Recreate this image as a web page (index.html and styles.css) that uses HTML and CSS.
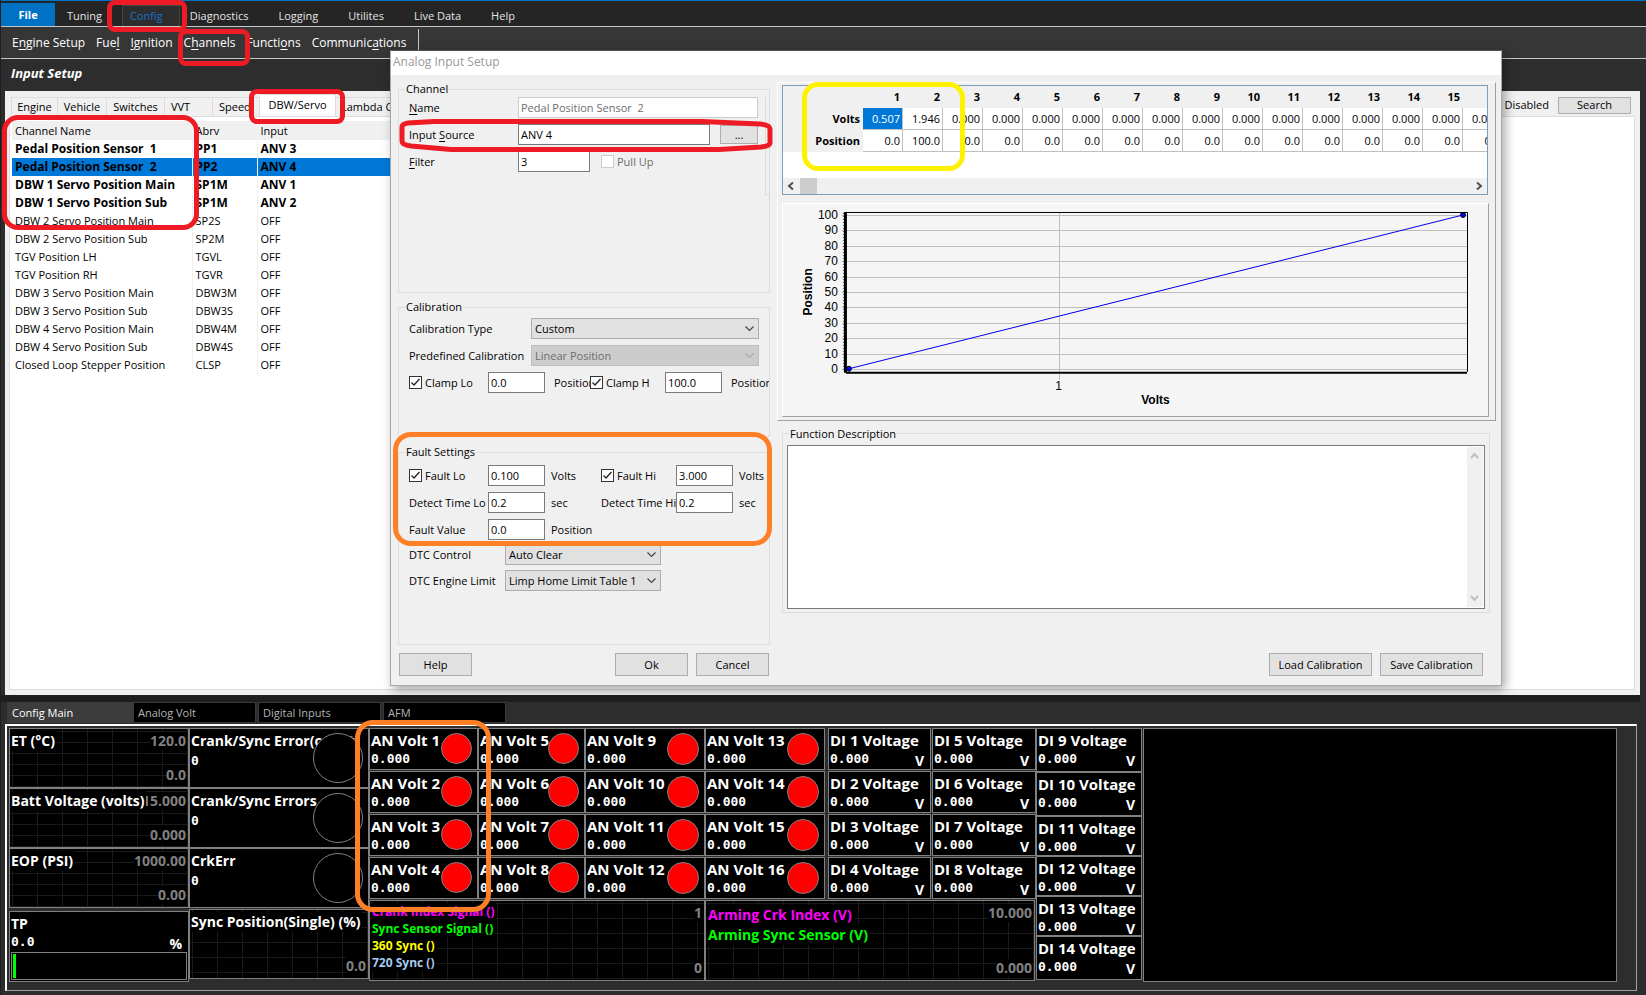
FILE: index.html
```html
<!DOCTYPE html>
<html lang="en">
<head>
<meta charset="utf-8">
<title>Input Setup</title>
<link rel="stylesheet" href="styles.css">
</head>
<body>
<div class="app">
  <nav class="menubar">
    <button class="file-btn">File</button>
    <button class="menu-item">Tuning</button>
    <button class="menu-item menu-active">Config</button>
    <button class="menu-item">Diagnostics</button>
    <button class="menu-item">Logging</button>
    <button class="menu-item">Utilites</button>
    <button class="menu-item">Live Data</button>
    <button class="menu-item">Help</button>
  </nav>
  <nav class="submenu">
    <button>E<u>n</u>gine Setup</button>
    <button>Fue<u>l</u></button>
    <button><u>I</u>gnition</button>
    <button>C<u>h</u>annels</button>
    <button>Functi<u>o</u>ns</button>
    <button>Communic<u>a</u>tions</button>
    <span class="submenu-end"></span>
  </nav>
  <h1 class="page-title">Input Setup</h1>

  <main class="setup">
    <div class="tabrow">
      <button class="tab">Engine</button>
      <button class="tab">Vehicle</button>
      <button class="tab tab-mid">Switches</button>
      <button class="tab tab-vvt">VVT</button>
      <button class="tab tab-speed">Speed</button>
      <button class="tab tab-on">DBW/Servo</button>
      <button class="tab tab-lambda">Lambda C</button>
      <span class="status">Disabled</span>
      <button class="btn search">Search</button>
    </div>
    <div class="list-body">
      <table class="channels">
        <thead><tr><th>Channel Name</th><th>Abrv</th><th>Input</th></tr></thead>
        <tbody>
          <tr class="set"><td>Pedal Position Sensor&nbsp; 1</td><td>PP1</td><td>ANV 3</td></tr>
          <tr class="set picked"><td>Pedal Position Sensor&nbsp; 2</td><td>PP2</td><td>ANV 4</td></tr>
          <tr class="set"><td>DBW 1 Servo Position Main</td><td>SP1M</td><td>ANV 1</td></tr>
          <tr class="set"><td>DBW 1 Servo Position Sub</td><td>SP1M</td><td>ANV 2</td></tr>
          <tr><td>DBW 2 Servo Position Main</td><td>SP2S</td><td>OFF</td></tr>
          <tr><td>DBW 2 Servo Position Sub</td><td>SP2M</td><td>OFF</td></tr>
          <tr><td>TGV Position LH</td><td>TGVL</td><td>OFF</td></tr>
          <tr><td>TGV Position RH</td><td>TGVR</td><td>OFF</td></tr>
          <tr><td>DBW 3 Servo Position Main</td><td>DBW3M</td><td>OFF</td></tr>
          <tr><td>DBW 3 Servo Position Sub</td><td>DBW3S</td><td>OFF</td></tr>
          <tr><td>DBW 4 Servo Position Main</td><td>DBW4M</td><td>OFF</td></tr>
          <tr><td>DBW 4 Servo Position Sub</td><td>DBW4S</td><td>OFF</td></tr>
          <tr><td>Closed Loop Stepper Position</td><td>CLSP</td><td>OFF</td></tr>
        </tbody>
      </table>
    </div>
  </main>

  <section class="dash">
    <div class="dash-tabs">
      <button class="dash-tab dash-tab-on">Config Main</button>
      <button class="dash-tab">Analog Volt</button>
      <button class="dash-tab">Digital Inputs</button>
      <button class="dash-tab">AFM</button>
    </div>
    <div class="canvas">
      <div class="col col-a">
        <div class="g graph tall"><b class="name">ET (°C)</b><span class="hi">120.0</span><span class="lo">0.0</span></div>
        <div class="g graph tall"><b class="name">Batt Voltage (volts)</b><span class="hi">15.000</span><span class="lo">0.000</span></div>
        <div class="g graph tall"><b class="name">EOP (PSI)</b><span class="hi">1000.00</span><span class="lo">0.00</span></div>
        <div class="g bar"><b class="name">TP</b><span class="val">0.0</span><span class="unit">%</span><div class="track"><i class="fill"></i></div></div>
      </div>
      <div class="col col-b">
        <div class="g tall"><b class="name">Crank/Sync Error(count)</b><span class="val">0</span><i class="lamp lamp-off"></i></div>
        <div class="g tall"><b class="name">Crank/Sync Errors</b><span class="val">0</span><i class="lamp lamp-off"></i></div>
        <div class="g tall"><b class="name">CrkErr</b><span class="val">0</span><i class="lamp lamp-off"></i></div>
        <div class="g graph sync"><b class="name">Sync Position(Single) (%)</b><span class="lo">0.0</span></div>
      </div>
      <div class="middle">
        <div class="volts">
          <div class="col col-c">
            <div class="g cell"><b class="name">AN Volt 1</b><span class="val">0.000</span><i class="lamp"></i></div>
            <div class="g cell"><b class="name">AN Volt 2</b><span class="val">0.000</span><i class="lamp"></i></div>
            <div class="g cell"><b class="name">AN Volt 3</b><span class="val">0.000</span><i class="lamp"></i></div>
            <div class="g cell"><b class="name">AN Volt 4</b><span class="val">0.000</span><i class="lamp"></i></div>
          </div>
          <div class="col col-d">
            <div class="g cell"><b class="name">AN Volt 5</b><span class="val">0.000</span><i class="lamp"></i></div>
            <div class="g cell"><b class="name">AN Volt 6</b><span class="val">0.000</span><i class="lamp"></i></div>
            <div class="g cell"><b class="name">AN Volt 7</b><span class="val">0.000</span><i class="lamp"></i></div>
            <div class="g cell"><b class="name">AN Volt 8</b><span class="val">0.000</span><i class="lamp"></i></div>
          </div>
          <div class="col col-e">
            <div class="g cell"><b class="name">AN Volt 9</b><span class="val">0.000</span><i class="lamp"></i></div>
            <div class="g cell"><b class="name">AN Volt 10</b><span class="val">0.000</span><i class="lamp"></i></div>
            <div class="g cell"><b class="name">AN Volt 11</b><span class="val">0.000</span><i class="lamp"></i></div>
            <div class="g cell"><b class="name">AN Volt 12</b><span class="val">0.000</span><i class="lamp"></i></div>
          </div>
          <div class="col col-e">
            <div class="g cell"><b class="name">AN Volt 13</b><span class="val">0.000</span><i class="lamp"></i></div>
            <div class="g cell"><b class="name">AN Volt 14</b><span class="val">0.000</span><i class="lamp"></i></div>
            <div class="g cell"><b class="name">AN Volt 15</b><span class="val">0.000</span><i class="lamp"></i></div>
            <div class="g cell"><b class="name">AN Volt 16</b><span class="val">0.000</span><i class="lamp"></i></div>
          </div>
          <div class="col col-g">
            <div class="g cell"><b class="name">DI 1 Voltage</b><span class="val">0.000</span><span class="unit">V</span></div>
            <div class="g cell"><b class="name">DI 2 Voltage</b><span class="val">0.000</span><span class="unit">V</span></div>
            <div class="g cell"><b class="name">DI 3 Voltage</b><span class="val">0.000</span><span class="unit">V</span></div>
            <div class="g cell"><b class="name">DI 4 Voltage</b><span class="val">0.000</span><span class="unit">V</span></div>
          </div>
          <div class="col col-h">
            <div class="g cell"><b class="name">DI 5 Voltage</b><span class="val">0.000</span><span class="unit">V</span></div>
            <div class="g cell"><b class="name">DI 6 Voltage</b><span class="val">0.000</span><span class="unit">V</span></div>
            <div class="g cell"><b class="name">DI 7 Voltage</b><span class="val">0.000</span><span class="unit">V</span></div>
            <div class="g cell"><b class="name">DI 8 Voltage</b><span class="val">0.000</span><span class="unit">V</span></div>
          </div>
        </div>
        <div class="traces">
          <div class="g graph trace trace-sync">
            <b class="line magenta">Crank Index Signal ()</b>
            <b class="line green">Sync Sensor Signal ()</b>
            <b class="line yellow-ink">360 Sync ()</b>
            <b class="line blue">720 Sync ()</b>
            <span class="hi">1</span><span class="lo">0</span>
          </div>
          <div class="g graph trace trace-arm">
            <b class="name magenta">Arming Crk Index (V)</b>
            <b class="name green">Arming Sync Sensor (V)</b>
            <span class="hi">10.000</span><span class="lo">0.000</span>
          </div>
        </div>
      </div>
      <div class="col col-i">
        <div class="g cell-l"><b class="name">DI 9 Voltage</b><span class="val">0.000</span><span class="unit">V</span></div>
        <div class="g cell-l"><b class="name">DI 10 Voltage</b><span class="val">0.000</span><span class="unit">V</span></div>
        <div class="g cell-s"><b class="name">DI 11 Voltage</b><span class="val">0.000</span><span class="unit">V</span></div>
        <div class="g cell-s"><b class="name">DI 12 Voltage</b><span class="val">0.000</span><span class="unit">V</span></div>
        <div class="g cell-s"><b class="name">DI 13 Voltage</b><span class="val">0.000</span><span class="unit">V</span></div>
        <div class="g cell-l"><b class="name">DI 14 Voltage</b><span class="val">0.000</span><span class="unit">V</span></div>
      </div>
      <div class="g blank"></div>
    </div>
  </section>
</div>

<div class="dialog" role="dialog" aria-label="Analog Input Setup">
  <div class="dialog-title">Analog Input Setup</div>
  <div class="dialog-body">
    <div class="left">
      <fieldset class="box box-channel">
        <legend>Channel</legend>
        <div class="row row-ch"><label for="nm"><u>N</u>ame</label><input id="nm" class="grow" value="Pedal Position Sensor  2" disabled></div>
        <div class="row row-ch row-src"><label for="src">Input <u>S</u>ource</label><input id="src" class="grow" value="ANV 4"><button class="btn dots" aria-label="Browse">...</button></div>
        <div class="row row-ch"><label for="flt"><u>F</u>ilter</label><input id="flt" class="filter" value="3"><label class="check off"><input type="checkbox" disabled>Pull Up</label></div>
      </fieldset>
      <fieldset class="box box-cal">
        <legend>Calibration</legend>
        <div class="row row-cal"><label for="ct">Calibration Type</label><select id="ct"><option>Custom</option></select></div>
        <div class="row row-cal"><label for="pc">Predefined Calibration</label><select id="pc" disabled><option>Linear Position</option></select></div>
        <div class="row row-clamp">
          <label class="check"><input type="checkbox" checked>Clamp Lo</label><input aria-label="Clamp Lo value" value="0.0"><span class="u">Position</span>
          <label class="check"><input type="checkbox" checked>Clamp H</label><input aria-label="Clamp Hi value" value="100.0"><span class="u">Position</span>
        </div>
      </fieldset>
      <fieldset class="box box-fault">
        <legend>Fault Settings</legend>
        <div class="row row-fault">
          <label class="check"><input type="checkbox" checked>Fault Lo</label><input aria-label="Fault Lo value" value="0.100"><span class="u">Volts</span>
          <label class="check"><input type="checkbox" checked>Fault Hi</label><input aria-label="Fault Hi value" value="3.000"><span class="u">Volts</span>
        </div>
        <div class="row row-fault">
          <label for="dl">Detect Time Lo</label><input id="dl" value="0.2"><span class="u">sec</span>
          <label for="dh">Detect Time Hi</label><input id="dh" value="0.2"><span class="u">sec</span>
        </div>
        <div class="row row-fault row-last"><label for="fv">Fault Value</label><input id="fv" value="0.0"><span class="u u-wide">Position</span></div>
        <div class="row row-dtc"><label for="dc">DTC Control</label><select id="dc"><option>Auto Clear</option></select></div>
        <div class="row row-dtc"><label for="de">DTC Engine Limit</label><select id="de"><option>Limp Home Limit Table 1</option></select></div>
      </fieldset>
    </div>
    <div class="right">
      <div class="curve">
        <div class="points">
          <div class="points-clip">
            <table>
              <thead><tr><th class="rh"></th><th>1</th><th>2</th><th>3</th><th>4</th><th>5</th><th>6</th><th>7</th><th>8</th><th>9</th><th>10</th><th>11</th><th>12</th><th>13</th><th>14</th><th>15</th><th></th></tr></thead>
              <tbody>
                <tr><th class="rh">Volts</th><td class="sel">0.507</td><td>1.946</td><td>0.000</td><td>0.000</td><td>0.000</td><td>0.000</td><td>0.000</td><td>0.000</td><td>0.000</td><td>0.000</td><td>0.000</td><td>0.000</td><td>0.000</td><td>0.000</td><td>0.000</td><td>0.000</td></tr>
                <tr><th class="rh">Position</th><td>0.0</td><td>100.0</td><td>0.0</td><td>0.0</td><td>0.0</td><td>0.0</td><td>0.0</td><td>0.0</td><td>0.0</td><td>0.0</td><td>0.0</td><td>0.0</td><td>0.0</td><td>0.0</td><td>0.0</td><td>0.0</td></tr>
              </tbody>
            </table>
          </div>
          <div class="hscroll">
            <svg width="17" height="16" viewBox="0 0 17 16"><path d="M10 4.500L6 8l4 3.500" fill="none" stroke="#505050" stroke-width="2"/></svg>
            <span class="thumb"></span>
            <svg width="17" height="16" viewBox="0 0 17 16"><path d="M7 4.500L11 8l-4 3.500" fill="none" stroke="#505050" stroke-width="2"/></svg>
          </div>
        </div>
        <div class="chart">
          <svg viewBox="0 0 706 212" role="img" aria-label="Position against Volts">
            <g stroke="#bebebe" stroke-width="1" shape-rendering="crispEdges">
              <path d="M59 11.500H685M59 26.500H685M59 42.500H685M59 57.500H685M59 73.500H685M59 88.500H685M59 103.500H685M59 119.500H685M59 134.500H685M59 150.500H685M59 165.500H685M276.500 9V176"/>
            </g>
            <path d="M60.500 9V168" stroke="#555" stroke-dasharray="1 2"/>
            <path d="M62.500 8V169" stroke="#000" stroke-width="3"/>
            <path d="M61 8.500H685.500V168" fill="none" stroke="#000"/>
            <path d="M63 169H685" stroke="#000" stroke-width="2"/>
            <path d="M66 165L681 11" stroke="#0000f0" fill="none"/>
            <circle cx="66" cy="165" r="2.500" fill="#00f" stroke="#000"/>
            <circle cx="681" cy="11" r="2.500" fill="#00f" stroke="#000"/>
            <g class="ticks" text-anchor="end">
              <text x="55" y="15">100</text><text x="55" y="30">90</text><text x="55" y="46">80</text><text x="55" y="61">70</text><text x="55" y="77">60</text><text x="55" y="92">50</text><text x="55" y="107">40</text><text x="55" y="123">30</text><text x="55" y="138">20</text><text x="55" y="154">10</text><text x="55" y="169">0</text>
            </g>
            <text class="ticks" x="276" y="186" text-anchor="middle">1</text>
            <text class="axis" x="373" y="200" text-anchor="middle">Volts</text>
            <text class="axis" transform="translate(29 88) rotate(-90)" text-anchor="middle">Position</text>
          </svg>
        </div>
      </div>
      <fieldset class="box box-desc">
        <legend>Function Description</legend>
        <div class="desc">
          <textarea aria-label="Function Description"></textarea>
          <div class="vscroll">
            <svg width="16" height="18" viewBox="0 0 16 18"><path d="M4 11l3.500-4L11 11" fill="none" stroke="#bfbfbf" stroke-width="2"/></svg>
            <svg width="16" height="18" viewBox="0 0 16 18"><path d="M4 7l3.500 4L11 7" fill="none" stroke="#bfbfbf" stroke-width="2"/></svg>
          </div>
        </div>
      </fieldset>
    </div>
  </div>
  <div class="dialog-foot">
    <div class="foot-left"><button class="btn">Help</button><span class="push"></span><button class="btn">Ok</button><button class="btn">Cancel</button></div>
    <div class="foot-right"><button class="btn wide">Load Calibration</button><button class="btn wide">Save Calibration</button></div>
  </div>
</div>

<i class="mark red m-config"></i>
<i class="mark red m-channels"></i>
<i class="mark red m-servo"></i>
<i class="mark red m-list"></i>
<svg class="m-source" width="374" height="36" viewBox="0 0 374 36"><path d="M3 9Q3 6 9 5L35 3.500H303L361 6Q371 7 371 11V25Q371 28 362 29L320 31.500H52L12 28Q3 27 3 23Z" fill="none" stroke="#ed1c24" stroke-width="5"/></svg>
<i class="mark orange m-fault"></i>
<i class="mark yellow m-points"></i>
<i class="mark orange m-volts"></i>
</body>
</html>
```
FILE: styles.css
```css
* { box-sizing: border-box; }
body {
  margin: 0;
  background: #2d2d2d;
  font: 11px/16px "Open Sans", "Noto Sans", sans-serif;
  color: #000;
  overflow: hidden;
}
button, input, select, textarea { font: inherit; color: inherit; border-radius: 0; margin: 0; }
button { border: 0; background: none; padding: 0; white-space: nowrap; }
u { text-underline-offset: 2px; }

.app { min-height: 100vh; display: flex; flex-direction: column; border-left: 1px solid #1e1e1e; }
.menubar {
  display: flex; gap: 30px; height: 27px; align-items: flex-end;
  background: #252525; color: #e4e4e4; border-top: 1px solid #0072c6; border-bottom: 1px solid #c8c8c8;
}
.file-btn { width: 54px; height: 23px; background: #0072c6; color: #fff; font-weight: bold; margin-right: -18px; }
.menu-item { height: 21px; }
.menu-active { color: #1570c8; background: #2d2d2d; border: 1px solid #444; border-bottom: 0; padding: 0 16px 0 7px; margin: 0 -20px 0 -10px; }
.submenu {
  display: flex; gap: 11px; height: 32px; padding-left: 11px; font-size: 12px;
  background: #363636; color: #fff; border-bottom: 1px solid #c8c8c8;
}
.submenu-end { width: 1px; background: #c8c8c8; margin: 2px 0 0 1px; }
.page-title { margin: 0; height: 32px; padding-left: 10px; font: italic bold 13px/29px "Open Sans", sans-serif; color: #fff; }

.setup { flex: 1; display: flex; flex-direction: column; margin: 0 6px 0 4px; background: #f0f0f0; padding: 3px 5px 5px 4px; }
.tabrow { display: flex; height: 22px; align-items: flex-end; padding-left: 2px; }
.tab { height: 19px; width: 49px; border: 1px solid #dcdcdc; border-width: 1px 1px 0 0; flex: none; }
.tab:first-child { border-left-width: 1px; width: 47px; }
.tab-mid { width: 58px; }
.tab-vvt { width: 48px; text-align: left; padding-left: 6px; }
.tab-speed { width: 47px; text-align: left; padding-left: 6px; }
.tab-on { width: 76px; background: #fff; margin-bottom: -1px; height: 23px; padding-bottom: 2px; }
.tab-lambda { width: 70px; text-align: left; padding-left: 5px; }
.status { margin-left: auto; align-self: center; margin-right: 9px; }
.btn { background: #e1e1e1; border: 1px solid #adadad; height: 23px; width: 73px; }
.search { height: 17px; line-height: 14px; align-self: center; margin-right: 4px; }
.list-body { flex: 1; background: #fff; border: 1px solid #dcdcdc; padding: 4px 0 0 2px; }

.channels { border-collapse: collapse; table-layout: fixed; width: 500px; }
.channels th, .channels td { padding: 0 3px; height: 18px; line-height: 18px; text-align: left; font-weight: normal; white-space: nowrap; border-right: 1px solid #f0f0f0; }
.channels th { background: #f0f0f0; height: 19px; }
.channels th:nth-child(1) { width: 180px; }
.channels th:nth-child(2) { width: 65px; }
.channels td:last-child { border-right: 0; }
.channels .set td { font-weight: bold; font-size: 12px; }
.channels .picked td { background: #0078d7; }

.dash { margin-right: 6px; border-top: 7px solid #1e1e1e; padding: 0 3px 4px 4px; }
.dash-tabs { display: flex; gap: 2px; height: 22px; padding-left: 2px; }
.dash-tab { width: 123px; height: 21px; line-height: 18px; background: #000; color: #b4b4b4; border: 1px solid #3a3a3a; text-align: left; padding-left: 4px; }
.dash-tab-on { width: 126px; background: #3c3c3c; color: #fff; margin-right: -2px; }
.canvas { display: flex; border: 1px solid #a0a0a0; border-width: 2px 1px 1px 2px; border-top-color: #fff; border-left-color: #fff; padding: 2px 19px 8px 2px; align-items: flex-start; }
.col { display: flex; flex-direction: column; flex: none; gap: 1px; }
.col-a { width: 180px; gap: 0; }
.col-b { width: 180px; gap: 0; }
.col-c { width: 109px; }
.col-d { width: 107px; }
.col-e { width: 120px; }
.col-g { width: 103px; margin: 0 1px 0 3px; }
.col-h { width: 104px; }
.col-i { width: 106px; gap: 0; margin-right: 1px; }
.middle { display: flex; flex-direction: column; gap: 1px; }
.volts, .traces { display: flex; }

.g { position: relative; background: #000; border: 1px solid #808080; color: #fff; overflow: hidden; padding: 2px 0 0 1px; }
.tall { height: 60px; }
.cell { height: 42px; }
.cell-l { height: 44px; }
.cell-s { height: 40px; }
.bar { height: 71px; margin-top: 3px; }
.sync { height: 70px; margin-top: 1px; }
.trace { height: 81px; padding-left: 2px; }
.trace-sync { width: 336px; }
.trace-arm { width: 330px; padding-top: 4px; }
.blank { flex: 1; align-self: stretch; }
.name { display: block; width: max-content; font-size: 14px; line-height: 20px; font-weight: bold; }
.volts .name, .col-i .name { font-size: 15px; line-height: 18px; }
.line { display: block; width: max-content; font-size: 12px; line-height: 17px; }
.val { display: block; font: bold 13px/20px "DejaVu Sans Mono", monospace; }
.bar .val { line-height: 16px; }
.unit { position: absolute; right: 6px; top: 24px; font-weight: bold; font-size: 14px; line-height: 16px; }
.lamp { position: absolute; right: 5px; top: 4px; width: 31px; height: 31px; border-radius: 50%; background: #f00; border: 1px solid #808080; }
.col-e .lamp { width: 32px; height: 32px; }
.lamp-off { width: 50px; height: 50px; background: #000; }
.graph { background: repeating-linear-gradient(90deg, #1a1a1a 0 1px, transparent 1px 25px) 2px 0, repeating-linear-gradient(#1a1a1a 0 1px, transparent 1px 11px) 0 2px, #000; }
.sync, .trace { background: repeating-linear-gradient(90deg, #1a1a1a 0 1px, transparent 1px 25px) 2px 0, repeating-linear-gradient(#1a1a1a 0 1px, transparent 1px 15px) 0 2px, #000; }
.graph .name, .graph .line { background: #000; position: relative; z-index: 1; padding-right: 2px; }
.hi, .lo { position: absolute; right: 2px; color: #808080; background: #000; font-size: 14px; line-height: 18px; font-weight: bold; }
.hi { top: 3px; }
.lo { bottom: 3px; }
.track { position: absolute; left: 1px; right: 1px; bottom: 1px; height: 28px; border: 1px solid #808080; padding: 1px; }
.fill { display: block; width: 3px; height: 24px; background: #0f0; }
.magenta { color: #f0f; }
.green { color: #0f0; }
.yellow-ink { color: #ff0; }
.blue { color: #a6caf0; }

.dialog { position: absolute; left: 390px; right: 144px; top: 50px; background: #f0f0f0; border: 1px solid #a8a8a8; border-top-color: #555; box-shadow: 3px 4px 10px rgba(0,0,0,.35); }
.dialog-title { height: 24px; line-height: 22px; background: #fff; color: #999; padding-left: 2px; font-size: 12px; }
.dialog-body { display: flex; padding: 6px 5px 0 7px; gap: 7px; }
.left { flex: none; width: 372px; }
.right { flex: 1; min-width: 0; }
.box { position: relative; margin: 0; min-width: 0; border: 1px solid #dcdcdc; padding: 0 0 0 10px; }
.box legend { margin-left: -4px; padding: 0 1px; line-height: 16px; height: 16px; }
.box-channel { height: 212px; }
.box-channel::after { content: ""; position: absolute; right: 0; top: 0; width: 3px; height: 97px; border: 1px solid #dcdcdc; border-width: 0 0 1px 1px; }
.box-cal { height: 138px; margin-top: 6px; padding-top: 3px; }
.box-fault { height: 201px; margin-top: 7px; padding-top: 5px; }
.row { display: flex; align-items: center; height: 21px; margin-bottom: 6px; white-space: nowrap; }
.row input:not([type]), .row select { height: 21px; min-width: 0; background: #fff; border: 1px solid #7a7a7a; padding: 0 2px; }
.row input:disabled:not([type]) { color: #6d6d6d; border-color: #ccc; background: #fff; }
.row-ch { padding-right: 11px; }
.row-ch > label:first-child { width: 109px; flex: none; }
.grow { flex: 1; }
.dots { width: 38px; height: 19px; line-height: 14px; margin-left: 10px; }
.row .filter { width: 72px; border-color: #5a7ca0; }
.check { display: flex; align-items: center; gap: 3px; }
.check.off { margin-left: 11px; color: #6d6d6d; }
.check input { appearance: none; flex: none; width: 13px; height: 13px; background: #fff; border: 1px solid #333; }
.check input:disabled { border-color: #ccc; }
.check input:checked { background: #fff url("data:image/svg+xml,%3Csvg xmlns='http://www.w3.org/2000/svg' viewBox='0 0 11 11'%3E%3Cpath d='M1.500 5.500l2.500 2.500 5.500-6' fill='none' stroke='%23222' stroke-width='1.300'/%3E%3C/svg%3E"); }
.row select { appearance: none; border-color: #adadad; padding: 0 20px 0 3px; background: #e1e1e1 url("data:image/svg+xml,%3Csvg xmlns='http://www.w3.org/2000/svg' width='9' height='6' viewBox='0 0 9 6'%3E%3Cpath d='M.5.5l4 4 4-4' fill='none' stroke='%23444' stroke-width='1.200'/%3E%3C/svg%3E") no-repeat right 4px center; }
.row select:disabled { background-color: #ccc; background-image: url("data:image/svg+xml,%3Csvg xmlns='http://www.w3.org/2000/svg' width='9' height='6' viewBox='0 0 9 6'%3E%3Cpath d='M.5.5l4 4 4-4' fill='none' stroke='%23aaa' stroke-width='1.200'/%3E%3C/svg%3E"); color: #6d6d6d; border-color: #bfbfbf; opacity: 1; }
.row-cal { margin-bottom: 6px; padding-right: 10px; }
.row-cal label { width: 122px; flex: none; }
.row-cal select { flex: 1; }
.row-clamp { display: grid; grid-template-columns: 79px 57px 45px 75px 57px 1fr; }
.row-fault { display: grid; grid-template-columns: 79px 57px 56px 75px 57px 1fr; }
.u { padding-left: 6px; overflow: hidden; }
.row-clamp .u { padding-left: 9px; }
.row-fault .u-wide { overflow: visible; }
.row-last { margin-bottom: 4px; }
.row-dtc { margin-bottom: 5px; }
.row-dtc label { width: 96px; flex: none; }
.row-dtc select { width: 156px; }

.curve { border: 1px solid #a0a0a0; border-top-color: #fff; border-left-color: #fff; padding: 2px 6px 3px 4px; margin-top: 1px; }
.points { border: 1px solid #7f9db9; margin-right: 1px; background: #fff; }
.points-clip { height: 92px; overflow: hidden; }
.points table { border-collapse: separate; border-spacing: 0; table-layout: fixed; width: 720px; }
.points th, .points td { padding: 0 2px 0 0; height: 22px; line-height: 18px; text-align: right; width: 40px; border: 1px solid #c0c0c0; border-width: 0 1px 1px 0; }
.points th { background: #f0f0f0; border: 0; padding-right: 3px; }
.points .rh { width: 80px; }
.points .sel { background: #0078d7; color: #fff; }
.hscroll { display: flex; height: 16px; background: #f0f0f0; }
.thumb { width: 17px; background: #cdcdcd; margin-right: auto; }
.chart { margin-top: 8px; background: #f5f5f5; border: 1px solid #a0a0a0; border-top-color: #fff; border-left-color: #fff; }
.chart svg { display: block; width: 100%; }
.ticks { font: 12px "Liberation Sans", sans-serif; }
.axis { font: bold 12px "Liberation Sans", sans-serif; }
.box-desc { margin: 5px 6px 0 5px; padding: 0 4px 3px; height: 187px; }
.box-desc legend { margin-left: 2px; }
.desc { display: flex; border: 1px solid #7a7a7a; background: #fff; height: 164px; padding: 1px; margin-top: 3px; }
.desc textarea { flex: 1; border: 0; resize: none; outline: 0; background: #fff; }
.vscroll { display: flex; flex-direction: column; justify-content: space-between; width: 16px; background: #f0f0f0; }
.dialog-foot { display: flex; justify-content: space-between; padding: 8px 18px 9px 8px; }
.foot-left { display: flex; gap: 8px; width: 370px; }
.foot-left .push { flex: 1; }
.foot-right { display: flex; gap: 8px; }
.wide { width: 103px; }

.mark { position: absolute; border: 5px solid; pointer-events: none; }
.red { border-color: #ed1c24; }
.orange { border-color: #ff7f27; border-radius: 18px; }
.yellow { border-color: #fff200; border-radius: 16px; }
.m-config { left: 107px; top: 0; width: 80px; height: 32px; border-radius: 8px; }
.m-channels { left: 178px; top: 29px; width: 72px; height: 37px; border-radius: 8px; }
.m-servo { left: 249px; top: 89px; width: 96px; height: 35px; border-radius: 8px; }
.m-list { left: 2px; top: 115px; width: 197px; height: 115px; border-radius: 16px; }
.m-source { position: absolute; left: 399px; top: 118px; pointer-events: none; }
.m-fault { left: 393px; top: 432px; width: 379px; height: 114px; }
.m-points { left: 802px; top: 82px; width: 163px; height: 89px; }
.m-volts { left: 355px; top: 720px; width: 136px; height: 192px; z-index: 2; }
```
